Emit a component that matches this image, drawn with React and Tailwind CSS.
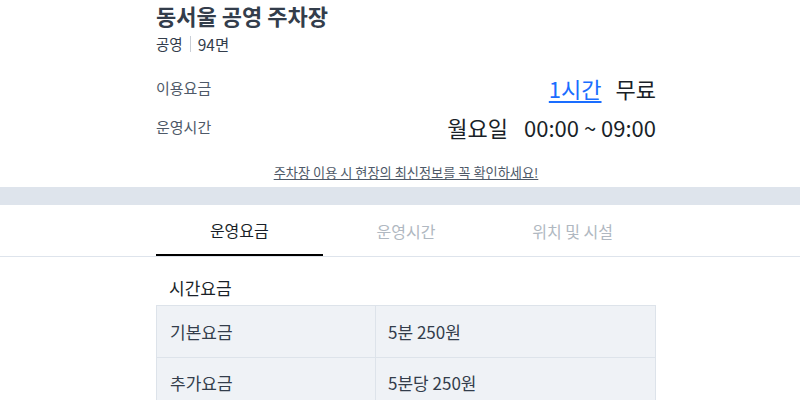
import React from 'react';

const font = { fontFamily: '"Noto Sans CJK KR", "Noto Sans", sans-serif' };

export default function App() {
  const tabs = ['운영요금', '운영시간', '위치 및 시설'];
  const rows = [
    ['기본요금', '5분 250원'],
    ['추가요금', '5분당 250원'],
  ];

  return (
    <div className="w-[800px] h-[400px] overflow-hidden bg-white text-[#333d4b]" style={font}>
      {/* 상단 정보 */}
      <div className="w-[500px] ml-[156px]">
        <h1 className="text-[22px] leading-[30px] font-bold text-[#333d4b]">동서울 공영 주차장</h1>
        <div className="flex items-center mt-[4px] text-[14.5px] leading-[20px] text-[#333d4b]">
          <span>공영</span>
          <span className="w-px h-[16px] bg-[#c9ced6] mx-[7px]" />
          <span className="text-[15.5px]">94면</span>
        </div>

        <div className="flex items-center justify-between mt-[16px] h-[36px]">
          <span className="text-[15px] text-[#4e5968]">이용요금</span>
          <div className="flex items-center gap-[14px] text-[22px]">
            <span className="text-[#1a6dff] underline underline-offset-[3px]">1시간</span>
            <span className="text-[#191f28]">무료</span>
          </div>
        </div>
        <div className="flex items-center justify-between mt-[3px] h-[36px]">
          <span className="text-[15px] text-[#4e5968]">운영시간</span>
          <div className="flex items-center gap-[16px] text-[22px] text-[#191f28]">
            <span>월요일</span>
            <span>00:00 ~ 09:00</span>
          </div>
        </div>

        <p className="text-center mt-[19px] text-[13.2px] leading-[18px] text-[#4e5968] underline">
          주차장 이용 시 현장의 최신정보를 꼭 확인하세요!
        </p>
      </div>

      {/* 구분 띠 */}
      <div className="h-[18px] bg-[#dee4ec] mt-[5px]" />

      {/* 탭 */}
      <div className="border-b border-[#dee4ec]">
        <div className="w-[500px] ml-[156px] flex">
          {tabs.map((t, i) => (
            <div
              key={t}
              className={`flex-1 h-[51px] flex items-center justify-center text-[16px] ${
                i === 0 ? 'text-[#191f28] border-b-2 border-black -mb-px' : 'text-[#b0b8c1]'
              }`}
            >
              {t}
            </div>
          ))}
        </div>
      </div>

      {/* 시간요금 */}
      <div className="w-[500px] ml-[156px]">
        <h2 className="px-[13px] pt-[20px] pb-[6px] text-[17px] leading-[22px] text-[#191f28]">시간요금</h2>
        <div className="border border-[#dde3ea] bg-[#eff2f6]">
          {rows.map(([k, v], i) => (
            <div key={k} className={`flex h-[51px] ${i > 0 ? 'border-t border-[#dde3ea]' : ''}`}>
              <div className="w-[219px] flex items-center px-[13px] text-[17px] text-[#333d4b] border-r border-[#dde3ea]">{k}</div>
              <div className="flex-1 flex items-center px-[12px] text-[17px] text-[#333d4b]">{v}</div>
            </div>
          ))}
        </div>
      </div>
    </div>
  );
}
